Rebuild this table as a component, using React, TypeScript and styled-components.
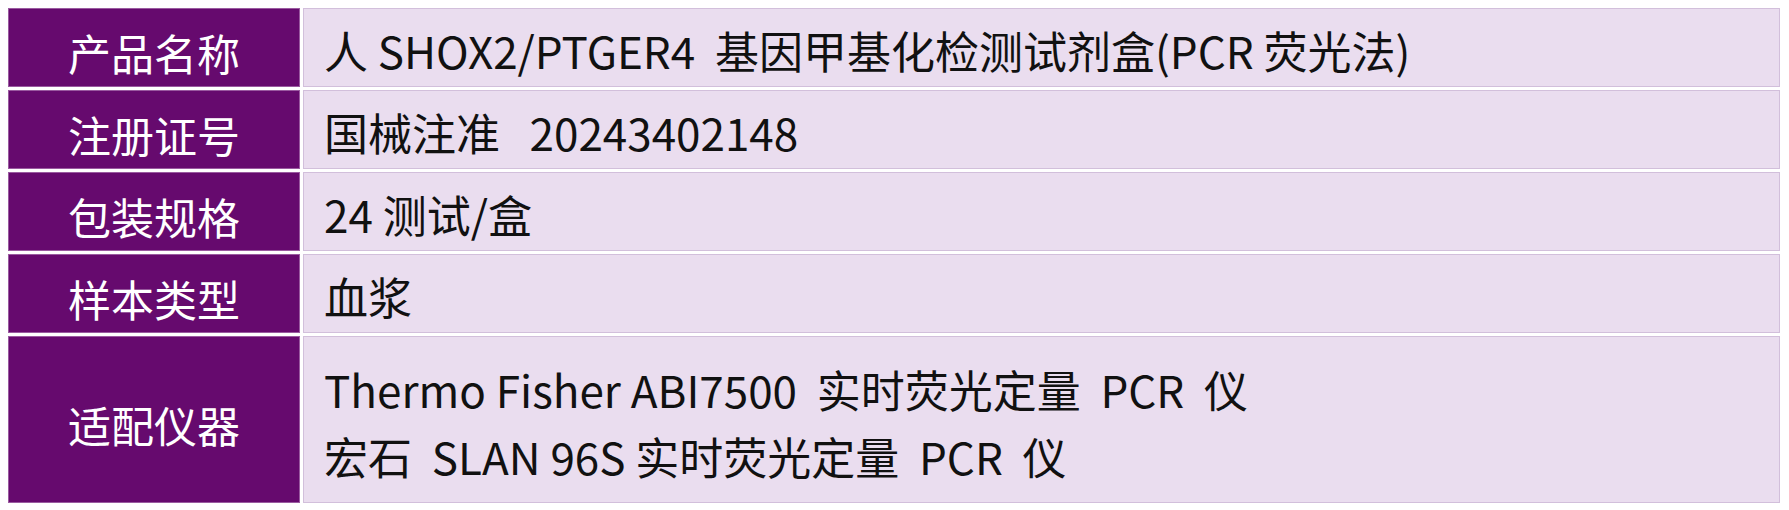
import React from "react";
import styled, { createGlobalStyle } from "styled-components";

const GlobalStyle = createGlobalStyle`
  body {
    margin: 8px;
    background: #ffffff;
    font-family: "Noto Sans CJK SC", "Noto Sans", sans-serif;
  }
`;

const Table = styled.div`
  display: grid;
  grid-template-columns: 292px 1fr;
  column-gap: 3px;
  row-gap: 3px;
  width: 1772px;
`;

const LabelCell = styled.div<{ tall?: boolean }>`
  box-sizing: border-box;
  min-height: ${(p) => (p.tall ? "167px" : "79px")};
  background: #660a6e;
  border: 1px solid #9a5aa0;
  color: #ffffff;
  font-size: 43px;
  display: flex;
  align-items: center;
  justify-content: center;
  padding-top: 8px;
`;

const ValueCell = styled.div`
  box-sizing: border-box;
  background: #eaddef;
  border: 1px solid #d2bfdb;
  color: #111111;
  font-size: 44px;
  line-height: 67px;
  display: flex;
  flex-direction: column;
  justify-content: center;
  padding: 6px 0 0 20px;
  white-space: pre;
`;

const rows: { label: string; lines: string[] }[] = [
  { label: "产品名称", lines: ["人 SHOX2/PTGER4  基因甲基化检测试剂盒(PCR 荧光法)"] },
  { label: "注册证号", lines: ["国械注准   20243402148"] },
  { label: "包装规格", lines: ["24 测试/盒"] },
  { label: "样本类型", lines: ["血浆"] },
  {
    label: "适配仪器",
    lines: [
      "Thermo Fisher ABI7500  实时荧光定量  PCR  仪",
      "宏石  SLAN 96S 实时荧光定量  PCR  仪",
    ],
  },
];

export default function App() {
  return (
    <>
      <GlobalStyle />
      <Table>
        {rows.map((r) => (
          <React.Fragment key={r.label}>
            <LabelCell tall={r.lines.length > 1}>{r.label}</LabelCell>
            <ValueCell>
              {r.lines.map((l) => (
                <div key={l}>{l}</div>
              ))}
            </ValueCell>
          </React.Fragment>
        ))}
      </Table>
    </>
  );
}
